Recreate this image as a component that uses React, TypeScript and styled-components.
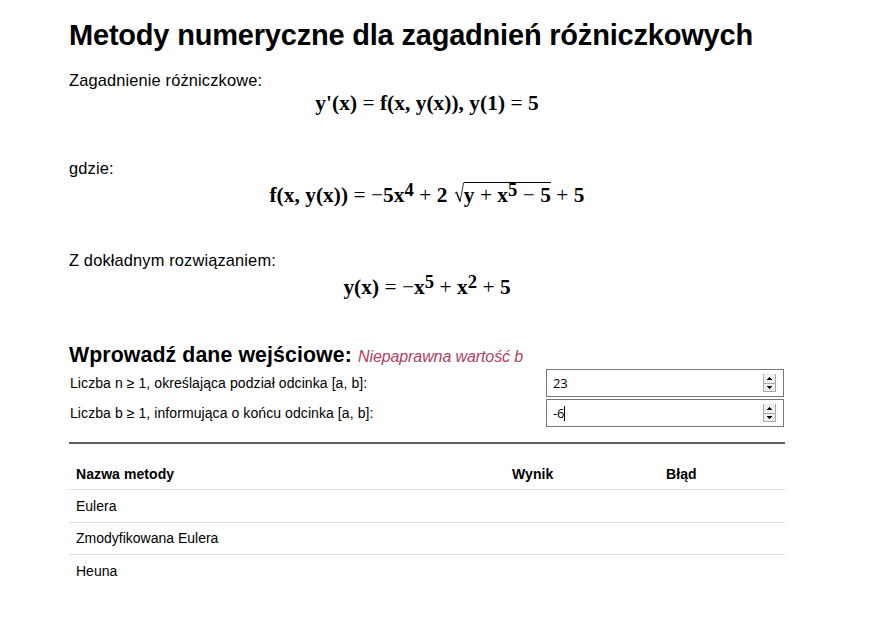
import React from "react";
import styled, { createGlobalStyle } from "styled-components";

const Global = createGlobalStyle`
  * { box-sizing: border-box; }
  body { margin: 0; background: #fff; color: #000; font-family: "Liberation Sans", Arial, sans-serif; font-size: 16px; }
`;
const Page = styled.main`
  width: 716px; margin-left: 69px; padding-top: 17px; height: 624px; overflow: hidden;
`;
const Title = styled.h1`
  margin: 0; font-size: 29px; letter-spacing: -0.2px; line-height: 36px; height: 53px; white-space: nowrap;
`;
const Section = styled.section<{ $h: number }>`
  height: ${(p) => p.$h}px;
`;
const Lead = styled.p<{ $gap?: number }>`
  margin: 0 0 ${(p) => p.$gap ?? 1}px; font-size: 16.4px; letter-spacing: 0.15px; line-height: 20px; height: 20px;
`;
const Formula = styled.p`
  margin: 0; text-align: center; font: bold 21.3px/24px "Liberation Serif", "Times New Roman", serif; letter-spacing: 0.06px; height: 24px; white-space: nowrap;
`;
const Sup = styled.sup`
  font-size: 18.6px; line-height: 0; vertical-align: 6px;
`;
const Op = styled.span`
  font-weight: normal;
`;
const Root = styled.svg`
  width: 10px; height: 22px; margin-left: 1px; vertical-align: -2px;
`;
const Radicand = styled.span`
  display: inline-block; height: 22px; line-height: 24px; vertical-align: top; border-top: 1px solid #000;
`;
const FormHead = styled.div`
  display: flex; align-items: baseline; gap: 7px; height: 27px; line-height: 28px; white-space: nowrap;
`;
const Subtitle = styled.h2`
  margin: 0; font-size: 21.3px; letter-spacing: 0.1px; width: 282px;
`;
const ErrorText = styled.em`
  color: #b0405f; letter-spacing: -0.1px;
`;
const Field = styled.div`
  display: grid; grid-template-columns: 476px 239px; height: 30px; align-items: center; padding-left: 1px; font-size: 14px; letter-spacing: 0.08px;
`;
const Input = styled.div`
  width: 238px; height: 28px; border: 1px solid #767676; display: flex; align-items: center; justify-content: space-between; padding: 0 7px 0 6px; font: 13px "Open Sans", sans-serif; letter-spacing: -0.2px;
`;
const Value = styled.span<{ $caret?: boolean }>`
  border-right: ${(p) => (p.$caret ? "1px solid #000" : "0")}; line-height: 15px;
`;
const Rule = styled.hr`
  margin: 14px 0 15px; border: 0; height: 2px; background: #606060;
`;
const Table = styled.table`
  width: 716px; table-layout: fixed; border-collapse: separate; border-spacing: 0; font-size: 14px;
`;
const Cell = styled.td<{ $h: number; $last?: boolean }>`
  height: ${(p) => p.$h}px; padding: 0 7px; text-align: left; border-bottom: ${(p) => (p.$last ? "0" : "1px solid #dcdcdc")};
`;
const HeadCell = styled(Cell)`
  letter-spacing: 0.08px;
`;
const BodyCell = styled(Cell)`
  line-height: 16px; padding-bottom: 1px;
`;

const Spinner = () => (
  <svg width="13" height="18" viewBox="0 0 13 18" shapeRendering="crispEdges">
    <path d="M0 0h13v18H0z" fill="#f0f0f0" />
    <path d="M.5 0v17.5h12V0M0 9.5h13" fill="none" stroke="#aaa" />
    <path d="M6 3h1v1h1v1h1v1H4V5h1V4h1zM4 12h5v1H8v1H7v1H6v-1H5v-1H4z" fill="#000" />
  </svg>
);

const methods = [
  { name: "Eulera", height: 33 },
  { name: "Zmodyfikowana Eulera", height: 32 },
  { name: "Heuna", height: 33 },
];

export default function App() {
  return (
    <Page>
      <Global />
      <Title>Metody numeryczne dla zagadnień różniczkowych</Title>
      <Section $h={88}>
        <Lead>Zagadnienie różniczkowe:</Lead>
        <Formula>y'(x) <Op>=</Op> f(x, y(x)), y(1) <Op>=</Op> 5</Formula>
      </Section>
      <Section $h={92}>
        <Lead $gap={4}>gdzie:</Lead>
        <Formula>
          f(x, y(x)) <Op>=</Op> <Op>−</Op>5x<Sup>4</Sup> <Op>+</Op> 2{" "}
          <Root viewBox="0 0 10 22" fill="none" stroke="#000">
            <path d="M.5 11.5 2.5 10M6 19.5 9.7.5" strokeWidth=".8" />
            <path d="M2.5 10 6 19.5" strokeWidth="1.3" />
          </Root>
          <Radicand>y <Op>+</Op> x<Sup>5</Sup> <Op>−</Op> 5</Radicand> <Op>+</Op> 5
        </Formula>
      </Section>
      <Section $h={91}>
        <Lead $gap={5}>Z dokładnym rozwiązaniem:</Lead>
        <Formula>y(x) <Op>=</Op> <Op>−</Op>x<Sup>5</Sup> <Op>+</Op> x<Sup>2</Sup> <Op>+</Op> 5</Formula>
      </Section>
      <FormHead><Subtitle>Wprowadź dane wejściowe:</Subtitle><ErrorText>Niepaprawna wartość b</ErrorText></FormHead>
      <Field>Liczba n ≥ 1, określająca podział odcinka [a, b]:<Input><Value>23</Value><Spinner /></Input></Field>
      <Field>Liczba b ≥ 1, informująca o końcu odcinka [a, b]:<Input><Value $caret>-6</Value><Spinner /></Input></Field>
      <Rule />
      <Table>
        <colgroup><col width="436" /><col width="154" /><col width="126" /></colgroup>
        <thead><tr><HeadCell as="th" $h={31}>Nazwa metody</HeadCell><HeadCell as="th" $h={31}>Wynik</HeadCell><HeadCell as="th" $h={31}>Błąd</HeadCell></tr></thead>
        <tbody>
          {methods.map(({ name, height }, i) => {
            const last = i === methods.length - 1;
            return (
              <tr key={name}>
                <BodyCell $h={height} $last={last}>{name}</BodyCell>
                <BodyCell $h={height} $last={last} />
                <BodyCell $h={height} $last={last} />
              </tr>
            );
          })}
        </tbody>
      </Table>
    </Page>
  );
}
